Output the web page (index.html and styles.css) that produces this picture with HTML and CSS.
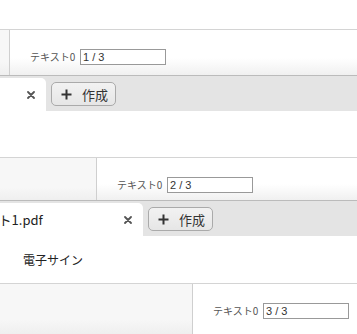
FILE: index.html
```html
<!DOCTYPE html>
<html lang="ja">
<head>
    <meta charset="UTF-8">
    <meta name="viewport" content="width=device-width, initial-scale=1.0">
    <title>電子サイン</title>
    <link rel="stylesheet" href="styles.css">
</head>
<body>
    <div class="page">
        <div class="tab-body top"></div>

        <section class="form-strip strip-a">
            <div class="side"></div>
            <div class="fields">
                <label class="field-label">テキスト0</label>
                <input class="page-no" type="text" value="1 / 3">
            </div>
        </section>
        <div class="tab-bar bar-a">
            <div class="tab">
                <span class="tab-name">テキスト1.pdf</span>
                <span class="tab-close">
                    <svg width="8" height="8" viewBox="0 0 8 8"><path d="M1 1L7 7M7 1L1 7" stroke="#555" stroke-width="1.8" stroke-linecap="round"/></svg>
                </span>
            </div>
            <button class="add-btn">
                <svg width="11" height="11" viewBox="0 0 11 11"><path d="M5.5 0.5V10.5M0.5 5.5H10.5" stroke="#333" stroke-width="2"/></svg>
                <span>作成</span>
            </button>
        </div>
        <div class="tab-body mid"></div>

        <section class="form-strip strip-b">
            <div class="side"></div>
            <div class="fields">
                <label class="field-label">テキスト0</label>
                <input class="page-no" type="text" value="2 / 3">
            </div>
        </section>
        <div class="tab-bar bar-b">
            <div class="tab">
                <span class="tab-name">テキスト1.pdf</span>
                <span class="tab-close">
                    <svg width="8" height="8" viewBox="0 0 8 8"><path d="M1 1L7 7M7 1L1 7" stroke="#555" stroke-width="1.8" stroke-linecap="round"/></svg>
                </span>
            </div>
            <button class="add-btn">
                <svg width="11" height="11" viewBox="0 0 11 11"><path d="M5.5 0.5V10.5M0.5 5.5H10.5" stroke="#333" stroke-width="2"/></svg>
                <span>作成</span>
            </button>
        </div>
        <div class="tab-body low">
            <p class="sign-title">電子サイン</p>
        </div>

        <section class="form-strip strip-c">
            <div class="side"></div>
            <div class="fields">
                <label class="field-label">テキスト0</label>
                <input class="page-no" type="text" value="3 / 3">
            </div>
        </section>
    </div>
</body>
</html>
```

FILE: styles.css
```css
body {
    margin: 0;
    font-family: "Noto Sans CJK JP", "Noto Sans", sans-serif;
    background-color: #fff;
    overflow: hidden;
}
.page {
    width: 357px;
    height: 334px;
    overflow: hidden;
}

/* white area under each tab */
.tab-body {
    background-color: #fff;
}
.tab-body.top { height: 29px; }
.tab-body.mid { height: 46px; }
.tab-body.low { height: 47px; }
.sign-title {
    margin: 0;
    padding: 15px 0 0 23px;
    font-size: 12px;
    line-height: 18px;
    color: #222;
}

/* form strip with the page counter */
.form-strip {
    display: flex;
    border-top: 1px solid #d4d4d4;
}
.strip-a { height: 45px; }
.strip-b { height: 42px; }
.strip-c { height: 50px; }
.side {
    flex: none;
    background: linear-gradient(#f7f7f7 70%, #efefef);
    border-right: 1px solid #cfcfcf;
}
.strip-a .side { width: 9px; }
.strip-b .side { width: 96px; }
.strip-c .side { width: 192px; }
.fields {
    flex: 1;
    display: flex;
    align-items: center;
    align-self: flex-start;
    height: 100%;
    box-sizing: border-box;
    padding-left: 20px;
    background: linear-gradient(#fff 62%, #f0f0f0);
}
.strip-c .fields { background: #fff; }
.fields {
    align-items: flex-start;
    padding-top: 19px;
}
.field-label {
    width: 50px;
    font-size: 10px;
    line-height: 16px;
    color: #555;
    white-space: nowrap;
}
.page-no {
    width: 86px;
    height: 16px;
    box-sizing: border-box;
    margin: 0;
    padding: 0 2px;
    border: 1px solid #999;
    font-family: "Liberation Sans", Arial, sans-serif;
    font-size: 11px;
    color: #333;
    background: #fff;
}

/* tab bar */
.tab-bar {
    display: flex;
    align-items: flex-start;
    height: 35px;
    border-top: 1px solid #bbb;
    background-color: #e4e4e4;
}
.tab {
    flex: none;
    display: flex;
    align-items: center;
    width: 193px;
    height: 33px;
    margin-top: 2px;
    box-sizing: border-box;
    padding: 0 11px 0 10px;
    background-color: #fff;
    border-top-right-radius: 5px;
}
.bar-a .tab { margin-left: -147px; }
.bar-b .tab { margin-left: -50px; }
.tab-name {
    font-size: 13px;
    color: #222;
    white-space: nowrap;
}
.tab-close {
    display: flex;
    margin-left: auto;
}
.add-btn {
    display: flex;
    align-items: center;
    gap: 10px;
    height: 24px;
    margin: 6px 0 0 5px;
    padding: 0 7px 0 9px;
    border: 1px solid #aaa;
    border-radius: 5px;
    background: linear-gradient(#f2f2f2, #e6e6e6);
    font-family: "Noto Sans CJK JP", sans-serif;
    font-size: 13px;
    color: #333;
}
```
